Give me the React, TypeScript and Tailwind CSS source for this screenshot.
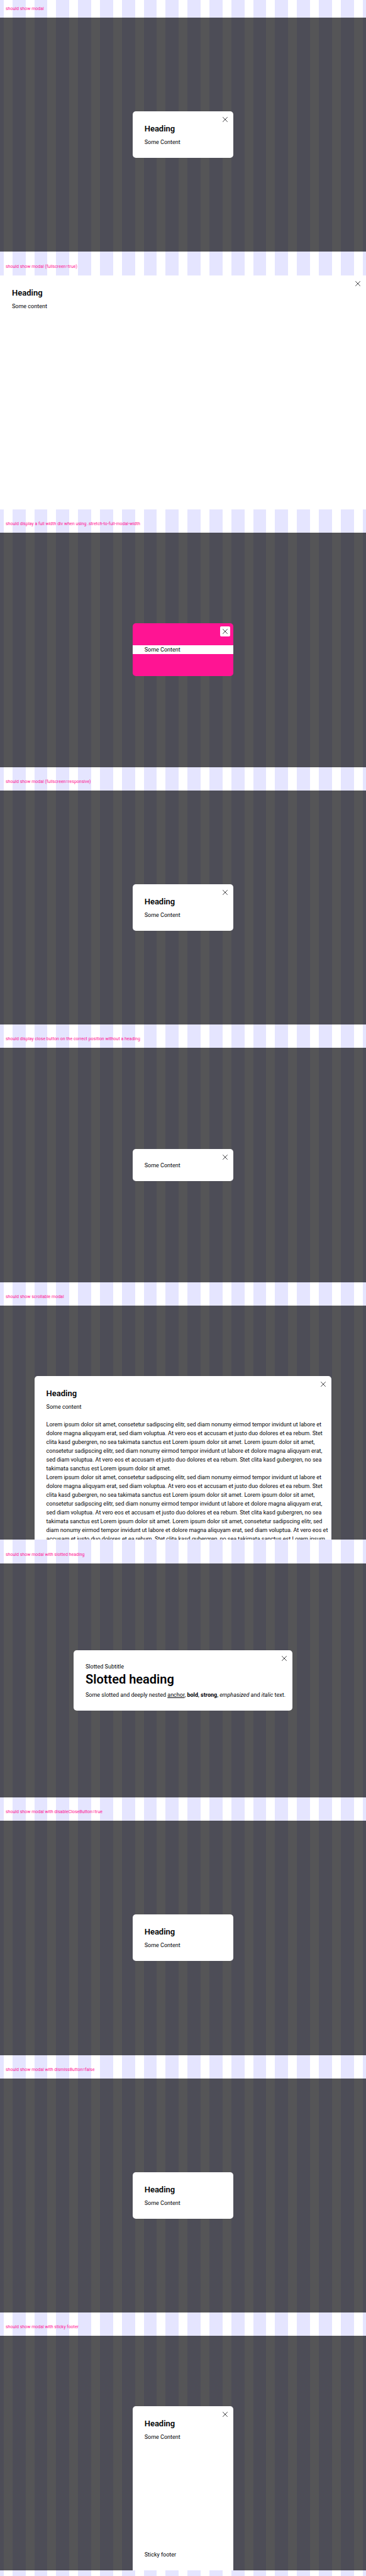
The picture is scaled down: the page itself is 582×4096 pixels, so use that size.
import type { ReactNode } from "react";

const scrollableLines = [
  "Lorem ipsum dolor sit amet, consetetur sadipscing elitr, sed diam nonumy eirmod tempor invidunt ut labore et",
  "dolore magna aliquyam erat, sed diam voluptua. At vero eos et accusam et justo duo dolores et ea rebum. Stet",
  "clita kasd gubergren, no sea takimata sanctus est Lorem ipsum dolor sit amet. Lorem ipsum dolor sit amet,",
  "consetetur sadipscing elitr, sed diam nonumy eirmod tempor invidunt ut labore et dolore magna aliquyam erat,",
  "sed diam voluptua. At vero eos et accusam et justo duo dolores et ea rebum. Stet clita kasd gubergren, no sea",
  "takimata sanctus est Lorem ipsum dolor sit amet.",
  "Lorem ipsum dolor sit amet, consetetur sadipscing elitr, sed diam nonumy eirmod tempor invidunt ut labore et",
  "dolore magna aliquyam erat, sed diam voluptua. At vero eos et accusam et justo duo dolores et ea rebum. Stet",
  "clita kasd gubergren, no sea takimata sanctus est Lorem ipsum dolor sit amet. Lorem ipsum dolor sit amet,",
  "consetetur sadipscing elitr, sed diam nonumy eirmod tempor invidunt ut labore et dolore magna aliquyam erat,",
  "sed diam voluptua. At vero eos et accusam et justo duo dolores et ea rebum. Stet clita kasd gubergren, no sea",
  "takimata sanctus est Lorem ipsum dolor sit amet. Lorem ipsum dolor sit amet, consetetur sadipscing elitr, sed",
  "diam nonumy eirmod tempor invidunt ut labore et dolore magna aliquyam erat, sed diam voluptua. At vero eos et",
  "accusam et justo duo dolores et ea rebum. Stet clita kasd gubergren, no sea takimata sanctus est Lorem ipsum",
];

function CloseButton() {
  return (
    <button
      type="button"
      aria-label="Dismiss modal"
      className="absolute top-[5px] right-[5px] flex size-4 items-center justify-center rounded-xs bg-white text-[#010205]"
    >
      <svg viewBox="0 0 14 14" className="size-2" fill="none" stroke="currentColor" strokeWidth="1.3">
        <path d="M.4.4l13.2 13.2M13.6.4L.4 13.6" />
      </svg>
    </button>
  );
}

function Heading({ children }: { children: ReactNode }) {
  return <h2 className="mb-[5px] text-[13px] leading-[18px] font-semibold">{children}</h2>;
}

function Section({ label, children }: { label: string; children: ReactNode }) {
  return (
    <section>
      <h1 className="flex h-7 items-center px-[9px] text-[7px] text-[#ff1493]">{label}</h1>
      {children}
    </section>
  );
}

function Scene({ align = "items-center", children }: { align?: string; children: ReactNode }) {
  return (
    <div className={`flex aspect-[25/16] justify-center overflow-hidden bg-[rgba(1,2,5,0.67)] ${align}`}>
      {children}
    </div>
  );
}

function Modal({
  closable = true,
  className = "min-w-[27.6%] rounded-[5px]",
  children,
}: {
  closable?: boolean;
  className?: string;
  children: ReactNode;
}) {
  return (
    <div role="dialog" className={`relative bg-white px-[19px] pt-[19px] pb-[18px] ${className}`}>
      {children}
      {closable && <CloseButton />}
    </div>
  );
}

export default function App() {
  return (
    <main className="grid min-h-screen auto-rows-fr bg-[repeating-linear-gradient(to_right,#e5e5ff_0%,#e5e5ff_1%,#ffffff_1%,#ffffff_3.4%,#e5e5ff_3.4%,#e5e5ff_5.98%)] font-[Roboto,sans-serif] text-[9px] leading-[14px] text-[#010205]">
      <Section label="should show modal">
        <Scene>
          <Modal>
            <Heading>Heading</Heading>
            <p>Some Content</p>
          </Modal>
        </Scene>
      </Section>
      <Section label="should show modal (fullscreen=true)">
        <div className="flex aspect-[25/16]">
          <Modal className="flex-1">
            <Heading>Heading</Heading>
            <p>Some content</p>
          </Modal>
        </div>
      </Section>
      <Section label="should display a full width div when using .stretch-to-full-modal-width">
        <Scene>
          <div role="dialog" className="relative min-w-[27.6%] overflow-hidden rounded-[5px] bg-[#ff1493] py-[35px]">
            <p className="bg-white px-[19px]">Some Content</p>
            <CloseButton />
          </div>
        </Scene>
      </Section>
      <Section label="should show modal (fullscreen=responsive)">
        <Scene>
          <Modal>
            <Heading>Heading</Heading>
            <p>Some Content</p>
          </Modal>
        </Scene>
      </Section>
      <Section label="should display close button on the correct position without a heading">
        <Scene>
          <Modal>
            <p>Some Content</p>
          </Modal>
        </Scene>
      </Section>
      <Section label="should show scrollable modal">
        <Scene align="items-start pt-28">
          <Modal className="w-[81.25%] rounded-t-[5px]">
            <Heading>Heading</Heading>
            <p className="mb-[14px]">Some content</p>
            {scrollableLines.map((line, index) => (
              <p key={index} className="whitespace-nowrap">
                {line}
              </p>
            ))}
          </Modal>
        </Scene>
      </Section>
      <Section label="should show modal with slotted heading">
        <Scene>
          <Modal className="w-[59.8%] rounded-[5px]">
            <p>Slotted Subtitle</p>
            <h2 className="mb-[5px] text-[20px] leading-[26px] font-semibold">Slotted heading</h2>
            <p className="whitespace-nowrap">
              Some slotted and deeply nested{" "}
              <a href="#anchor" className="underline">
                anchor
              </a>
              , <b>bold</b>, <strong>strong</strong>, <em>emphasized</em> and <i>italic</i> text.
            </p>
          </Modal>
        </Scene>
      </Section>
      <Section label="should show modal with disableCloseButton=true">
        <Scene>
          <Modal closable={false}>
            <Heading>Heading</Heading>
            <p>Some Content</p>
          </Modal>
        </Scene>
      </Section>
      <Section label="should show modal with dismissButton=false">
        <Scene>
          <Modal closable={false}>
            <Heading>Heading</Heading>
            <p>Some Content</p>
          </Modal>
        </Scene>
      </Section>
      <Section label="should show modal with sticky footer">
        <Scene align="items-stretch pt-28">
          <Modal className="flex min-w-[27.6%] flex-col rounded-t-[5px]">
            <Heading>Heading</Heading>
            <p className="flex-1">Some Content</p>
            <p>Sticky footer</p>
          </Modal>
        </Scene>
      </Section>
    </main>
  );
}
